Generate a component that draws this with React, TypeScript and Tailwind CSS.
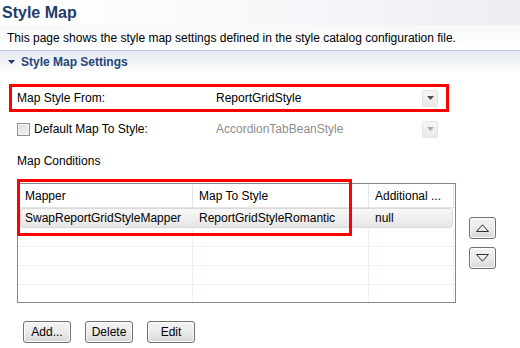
import React from "react";

const font = { fontFamily: '"Liberation Sans", Arial, sans-serif' };

function ComboArrow({ disabled }: { disabled?: boolean }) {
  return (
    <div className="flex h-[17px] w-[16px] items-center justify-center rounded-[2px] border border-[#e3e3e3] bg-gradient-to-b from-[#f6f6f6] to-[#e9e9e9]">
      <svg width="7" height="4" viewBox="0 0 7 4">
        <path d="M0 0h7L3.5 4z" fill={disabled ? "#a8a8a8" : "#505050"} />
      </svg>
    </div>
  );
}

function PushButton({ label, width }: { label: string; width: string }) {
  return (
    <div
      className={`${width} flex h-[22px] items-center justify-center rounded-[3px] border border-[#707070] bg-gradient-to-b from-[#f3f3f3] via-[#ebebeb] to-[#d8d8d8] text-[12px] text-black shadow-[inset_0_0_0_1px_#fcfcfc]`}
    >
      {label}
    </div>
  );
}

function ArrowButton({ up }: { up?: boolean }) {
  return (
    <div className="flex h-[22px] w-[27px] items-center justify-center rounded-[3px] border border-[#707070] bg-gradient-to-b from-[#f3f3f3] via-[#ebebeb] to-[#d8d8d8] shadow-[inset_0_0_0_1px_#fcfcfc]">
      <svg width="13" height="8" viewBox="0 0 13 8">
        {up ? (
          <path d="M0.5 7.5h12L6.5 0.8z" fill="none" stroke="#303030" strokeWidth="1" />
        ) : (
          <path d="M0.5 0.5h12L6.5 7.2z" fill="none" stroke="#303030" strokeWidth="1" />
        )}
      </svg>
    </div>
  );
}

const rows = [
  ["SwapReportGridStyleMapper", "ReportGridStyleRomantic", "null"],
  ["", "", ""],
  ["", "", ""],
  ["", "", ""],
  ["", "", ""],
];

export default function App() {
  return (
    <div className="flex h-[348px] w-[520px] flex-col overflow-hidden bg-white text-[12px] text-black" style={font}>
      {/* title */}
      <div className="flex h-[25px] items-center bg-gradient-to-r from-white via-[#f7f8fa] to-[#eceef2] px-[2px]">
        <span className="text-[16px] font-bold text-[#1f3d6a]">Style Map</span>
      </div>
      <div className="flex h-[25px] items-center bg-gradient-to-b from-[#f7f8fa] to-white pl-[7px]">
        This page shows the style map settings defined in the style catalog configuration file.
      </div>
      <div className="h-px bg-[#b9c9db]" />

      {/* section header */}
      <div className="flex h-[22px] items-center gap-[6px] bg-gradient-to-b from-[#e4e9f1] to-white pl-[8px]">
        <svg width="7" height="4" viewBox="0 0 7 4">
          <path d="M0 0h7L3.5 4z" fill="#1f3d6a" />
        </svg>
        <span className="font-bold text-[#25467a]">Style Map Settings</span>
      </div>

      {/* map style from */}
      <div className="ml-[9px] mt-[11px] flex h-[28px] w-[440px] items-center border-[3px] border-[#ff0000] pl-[5px] pr-[8px]">
        <span className="w-[199px]">Map Style From:</span>
        <span className="flex-1">ReportGridStyle</span>
        <ComboArrow />
      </div>

      {/* default map to style */}
      <div className="ml-[9px] mt-[3px] flex h-[28px] w-[440px] items-center border-[3px] border-transparent pl-[5px] pr-[8px]">
        <div className="flex w-[199px] items-center gap-[4px]">
          <div className="h-[13px] w-[13px] border border-[#8e8f8f] bg-gradient-to-br from-[#dcdcdc] to-[#f4f4f4] shadow-[inset_0_0_0_1px_#f4f4f4]" />
          <span>Default Map To Style:</span>
        </div>
        <span className="flex-1 text-[#8d8d8d]">AccordionTabBeanStyle</span>
        <ComboArrow disabled />
      </div>

      <div className="ml-[17px] mt-[10px] flex h-[16px] items-center">Map Conditions</div>

      {/* table + side buttons */}
      <div className="ml-[17px] mt-[14px] flex">
        <div className="relative">
          <div className="flex h-[120px] w-[439px] flex-col overflow-hidden border border-[#828790] bg-white">
            <div className="flex h-[24px] shrink-0 border-b border-[#e5e5e5]">
              <div className="flex w-[175px] items-center border-r border-[#e5e5e5] pl-[7px]">Mapper</div>
              <div className="flex w-[176px] items-center border-r border-[#e5e5e5] pl-[6px]">Map To Style</div>
              <div className="flex w-[85px] items-center border-r border-[#e5e5e5] pl-[6px]">Additional ...</div>
            </div>
            {rows.map((r, i) =>
              i === 0 ? (
                <div key={i} className="flex h-[20px] shrink-0 px-[2px]">
                  <div className="flex w-[434px] rounded-[3px] border border-[#d9d9d9] bg-gradient-to-b from-[#f8f8f8] to-[#e6e6e6]">
                    <div className="flex w-[172px] items-center pl-[4px]">{r[0]}</div>
                    <div className="flex w-[176px] items-center pl-[6px]">{r[1]}</div>
                    <div className="flex flex-1 items-center pl-[6px]">{r[2]}</div>
                  </div>
                </div>
              ) : (
                <div key={i} className="flex h-[19px] shrink-0 border-b border-[#f0f0f0]">
                  <div className="w-[175px] border-r border-[#eaf0f8]" />
                  <div className="w-[176px] border-r border-[#eaf0f8]" />
                  <div className="w-[85px] border-r border-[#eaf0f8]" />
                </div>
              )
            )}
          </div>
          <div className="absolute left-0 top-[-4px] h-[57px] w-[335px] border-[3px] border-[#ff0000]" />
        </div>
        <div className="ml-[13px] flex flex-col gap-[8px] pt-[34px]">
          <ArrowButton up />
          <ArrowButton />
        </div>
      </div>

      {/* buttons */}
      <div className="ml-[23px] mt-[18px] flex gap-[14px]">
        <PushButton label="Add..." width="w-[48px]" />
        <PushButton label="Delete" width="w-[48px]" />
        <PushButton label="Edit" width="w-[48px]" />
      </div>
    </div>
  );
}
